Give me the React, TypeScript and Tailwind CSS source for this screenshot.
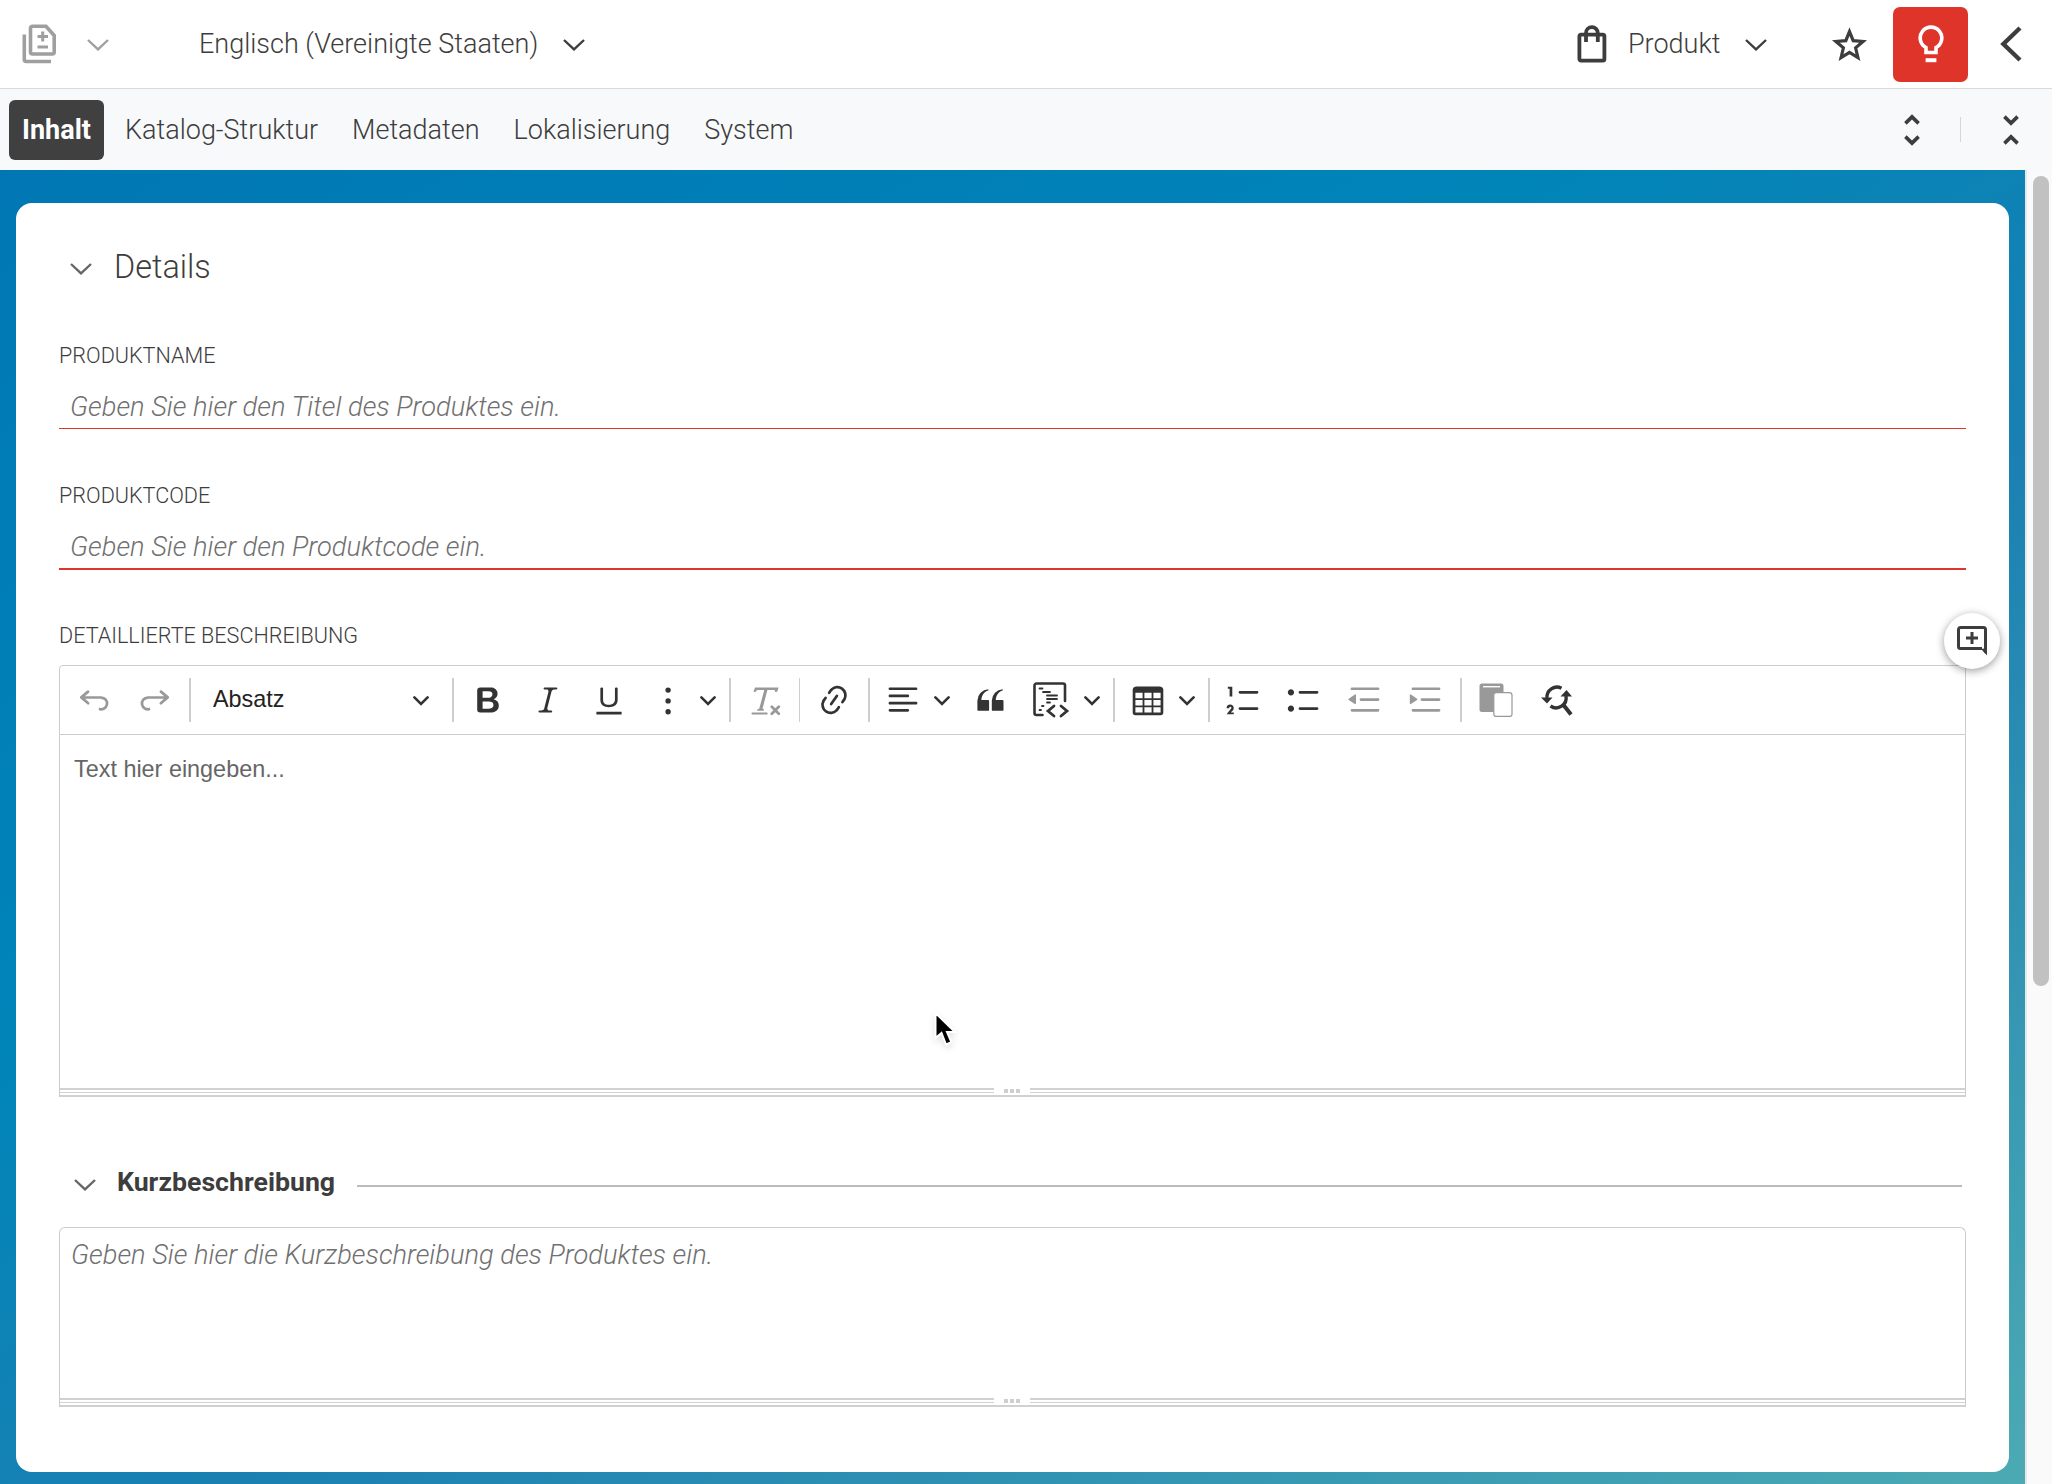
import React from "react"

const paths = {
  undo: "m5.042 9.367 2.189 1.837a.75.75 0 0 1-.965 1.149l-3.788-3.18a.747.747 0 0 1-.21-.284.75.75 0 0 1 .17-.945L6.23 4.762a.75.75 0 1 1 .964 1.15L4.863 7.866h8.917A.75.75 0 0 1 14 7.9a4 4 0 1 1-1.477 7.718l.344-1.489a2.5 2.5 0 1 0 1.094-4.73l.008-.032H5.042z",
  redo: "m14.958 9.367-2.189 1.837a.75.75 0 0 0 .965 1.149l3.788-3.18a.747.747 0 0 0 .21-.284.75.75 0 0 0-.17-.945L13.77 4.762a.75.75 0 1 0-.964 1.15l2.331 1.955H6.22A.75.75 0 0 0 6 7.9a4 4 0 1 0 1.477 7.718l-.344-1.489A2.5 2.5 0 1 1 6.039 9.4l-.008-.032h8.927z",
  bold: "M10.187 17H5.773c-.637 0-1.092-.138-1.364-.415-.273-.277-.409-.718-.409-1.323V4.738c0-.617.14-1.062.419-1.332.279-.27.73-.406 1.354-.406h4.68c.69 0 1.288.041 1.793.124.506.083.96.242 1.36.478.341.197.644.447.906.75a3.262 3.262 0 0 1 .808 2.162c0 1.401-.722 2.426-2.167 3.075C15.05 10.175 16 11.315 16 13.01a3.756 3.756 0 0 1-2.296 3.504 6.1 6.1 0 0 1-1.517.377c-.571.073-1.238.11-2 .11zm-.217-6.217H7v4.087h3.069c1.977 0 2.965-.69 2.965-2.072 0-.707-.256-1.22-.768-1.537-.512-.319-1.277-.478-2.296-.478zM7 5.13v3.619h2.606c.729 0 1.292-.067 1.69-.2a1.6 1.6 0 0 0 .91-.765c.165-.267.247-.566.247-.897 0-.707-.26-1.176-.778-1.409-.519-.232-1.31-.348-2.375-.348H7z",
  italic: "m9.586 14.633.021.004c-.036.335.095.655.393.962.082.083.173.15.274.201h1.474a.6.6 0 1 1 0 1.2H5.304a.6.6 0 0 1 0-1.2h1.15c.474-.07.809-.182 1.005-.334.157-.122.291-.32.404-.597l2.416-9.55a1.053 1.053 0 0 0-.281-.823 1.12 1.12 0 0 0-.442-.296H8.15a.6.6 0 0 1 0-1.2h6.443a.6.6 0 1 1 0 1.2h-1.195c-.376.056-.65.155-.823.296-.215.175-.423.439-.623.79l-2.366 9.347z",
  underline: "M3 18v-1.5h14V18zm2.2-8V3.6c0-.4.4-.6.8-.6.3 0 .7.2.7.6v6.2c0 2 1.3 2.8 3.2 2.8 1.9 0 3.4-.9 3.4-2.9V3.6c0-.3.4-.5.8-.5.3 0 .7.2.7.5V10c0 2.7-2.2 4-4.9 4-2.6 0-4.7-1.2-4.7-4z",
  more: "M8 4.5a1.5 1.5 0 1 0 3 0 1.5 1.5 0 0 0-3 0zm0 6a1.5 1.5 0 1 0 3 0 1.5 1.5 0 0 0-3 0zm0 6a1.5 1.5 0 1 0 3 0 1.5 1.5 0 0 0-3 0z",
  removeFormat: "M8.69 14.915c.053.052.173.083.36.093a.366.366 0 0 1 .345.485l-.003.01a.738.738 0 0 1-.697.497h-2.67a.374.374 0 0 1-.353-.496l.013-.038a.681.681 0 0 1 .644-.458c.197-.012.325-.043.386-.093a.28.28 0 0 0 .072-.11L9.592 4.5H6.269c-.359-.017-.609.013-.75.09-.142.078-.289.265-.442.563-.192.29-.516.464-.864.464H4.17a.43.43 0 0 1-.407-.569L4.46 3h13.08l-.62 2.043a.81.81 0 0 1-.775.574h-.114a.486.486 0 0 1-.486-.486c.001-.284-.054-.464-.167-.54-.112-.076-.367-.106-.766-.091h-3.28l-2.68 10.257c-.006.074.007.127.038.158zM3 17h8a.5.5 0 1 1 0 1H3a.5.5 0 1 1 0-1zm11.299 1.17a.75.75 0 1 1-1.06-1.06l1.414-1.415-1.415-1.414a.75.75 0 0 1 1.06-1.06l1.415 1.414 1.414-1.415a.75.75 0 1 1 1.06 1.06l-1.413 1.415 1.414 1.415a.75.75 0 0 1-1.06 1.06l-1.415-1.414-1.414 1.414z",
  link: "m11.077 15 .991-1.416a.75.75 0 1 1 1.229.86l-1.148 1.64a.748.748 0 0 1-.217.206 5.251 5.251 0 0 1-8.503-5.955.741.741 0 0 1 .12-.274l1.147-1.639a.75.75 0 1 1 1.228.86L4.933 10.7l.006.003a3.75 3.75 0 0 0 6.132 4.294l.006.004zm5.494-5.335a.748.748 0 0 1-.12.274l-1.147 1.639a.75.75 0 1 1-1.228-.86l.86-1.23a3.75 3.75 0 0 0-6.144-4.301l-.86 1.229a.75.75 0 0 1-1.229-.86l1.148-1.64a.748.748 0 0 1 .217-.206 5.251 5.251 0 0 1 8.503 5.955zm-4.563-2.532a.75.75 0 0 1 .184 1.045l-3.155 4.505a.75.75 0 1 1-1.229-.86l3.155-4.506a.75.75 0 0 1 1.045-.184z",
  align: "M2 3.75c0 .414.336.75.75.75h14.5a.75.75 0 1 0 0-1.5H2.75a.75.75 0 0 0-.75.75zm0 8c0 .414.336.75.75.75h14.5a.75.75 0 1 0 0-1.5H2.75a.75.75 0 0 0-.75.75zm0 4c0 .414.336.75.75.75h9.929a.75.75 0 1 0 0-1.5H2.75a.75.75 0 0 0-.75.75zm0-8c0 .414.336.75.75.75h9.929a.75.75 0 1 0 0-1.5H2.75a.75.75 0 0 0-.75.75z",
  quote: "M3 10.423a6.5 6.5 0 0 1 6.056-6.408l.038.67C6.448 5.423 5.354 7.663 5.22 10H9c.552 0 .5.432.5.986v4.511c0 .554-.448.503-1 .503h-5c-.552 0-.5-.449-.5-1.003v-4.574zm8 0a6.5 6.5 0 0 1 6.056-6.408l.038.67c-2.646.739-3.74 2.979-3.873 5.315H17c.552 0 .5.432.5.986v4.511c0 .554-.448.503-1 .503h-5c-.552 0-.5-.449-.5-1.003v-4.574z",
  table: "M3 6v3h4V6H3zm0 4v3h4v-3H3zm0 4v3h4v-3H3zm5 3h4v-3H8v3zm5 0h4v-3h-4v3zm4-4v-3h-4v3h4zm0-4V6h-4v3h4zm1.5 8a1.5 1.5 0 0 1-1.5 1.5H3A1.5 1.5 0 0 1 1.5 17V4c.222-.863 1.068-1.5 2-1.5h13c.932 0 1.778.637 2 1.5v13zM12 13v-3H8v3h4zm0-4V6H8v3h4z",
  numbered: "M7 5.75c0 .414.336.75.75.75h9.5a.75.75 0 1 0 0-1.5h-9.5a.75.75 0 0 0-.75.75zM3.5 3v5H2V3.7H1v-1h2.5V3zM.343 17.857l2.59-3.257H2.92a.6.6 0 1 0-1.04 0H.302a2 2 0 1 1 3.995 0h-.001c-.048.405-.16.734-.333.988-.175.254-.59.692-1.244 1.312H4.3v1h-4l.043-.043zM7 14.75a.75.75 0 0 1 .75-.75h9.5a.75.75 0 1 1 0 1.5h-9.5a.75.75 0 0 1-.75-.75z",
  bulleted: "M7 5.75c0 .414.336.75.75.75h9.5a.75.75 0 1 0 0-1.5h-9.5a.75.75 0 0 0-.75.75zm-6 0C1 4.784 1.777 4 2.75 4c.966 0 1.75.777 1.75 1.75 0 .966-.777 1.75-1.75 1.75C1.784 7.5 1 6.723 1 5.75zm6 9c0 .414.336.75.75.75h9.5a.75.75 0 1 0 0-1.5h-9.5a.75.75 0 0 0-.75.75zm-6 0c0-.966.777-1.75 1.75-1.75.966 0 1.75.777 1.75 1.75 0 .966-.777 1.75-1.75 1.75-.966 0-1.75-.777-1.75-1.75z",
  outdent: "M2 3.75c0 .414.336.75.75.75h14.5a.75.75 0 1 0 0-1.5H2.75a.75.75 0 0 0-.75.75zm5 6c0 .414.336.75.75.75h9.5a.75.75 0 1 0 0-1.5h-9.5a.75.75 0 0 0-.75.75zM2.75 16.5h14.5a.75.75 0 1 0 0-1.5H2.75a.75.75 0 1 0 0 1.5zm1.618-9.55L.98 9.358a.4.4 0 0 0 .013.661l3.39 2.207A.4.4 0 0 0 5 11.892V7.275a.4.4 0 0 0-.632-.326z",
  indent: "M2 3.75c0 .414.336.75.75.75h14.5a.75.75 0 1 0 0-1.5H2.75a.75.75 0 0 0-.75.75zm5 6c0 .414.336.75.75.75h9.5a.75.75 0 1 0 0-1.5h-9.5a.75.75 0 0 0-.75.75zM2.75 16.5h14.5a.75.75 0 1 0 0-1.5H2.75a.75.75 0 1 0 0 1.5zM1.632 6.95 5.02 9.358a.4.4 0 0 1-.013.661l-3.39 2.207A.4.4 0 0 1 1 11.892V7.275a.4.4 0 0 1 .632-.326z",
}

const ToolIcon = ({ name, className = "" }: { name: keyof typeof paths, className?: string }) => (
  <svg viewBox="0 0 20 20" fill="currentColor" fillRule="evenodd" className={`w-9 h-9 shrink-0 ${className}`}>
    <path d={paths[name]} />
  </svg>
)

const Chevron = ({ className = "" }: { className?: string }) => (
  <svg viewBox="0 0 22 12" fill="none" stroke="currentColor" strokeWidth="2.4" className={`w-[22px] h-3 shrink-0 ${className}`}>
    <path d="M1 1l10 9.4L21 1" />
  </svg>
)

const SmallChevron = ({ className = "" }: { className?: string }) => (
  <svg viewBox="0 0 16 10" fill="none" stroke="currentColor" strokeWidth="2.6" strokeLinecap="round" className={`w-4 h-2.5 shrink-0 ${className}`}>
    <path d="M1.4 1.4L8 7.9l6.6-6.5" />
  </svg>
)

const Sep = ({ className = "" }: { className?: string }) => (
  <div className={`h-11 shrink-0 bg-[#ccced1] ${className}`}></div>
)

const ResizeHandle = () => (
  <div className="relative h-[9px] flex flex-col justify-between">
    <div className="h-0.5 bg-[#d1d1d1]"></div>
    <div className="h-px bg-[#d1d1d1]"></div>
    <div className="h-0.5 bg-[#d1d1d1]"></div>
    <div className="absolute left-[934px] -top-0.5 h-[9px] w-9 bg-white flex items-center justify-center gap-0.5 pt-px">
      <div className="w-1 h-1 bg-[#cfcfcf]"></div>
      <div className="w-1 h-1 bg-[#cfcfcf]"></div>
      <div className="w-1 h-1 bg-[#cfcfcf]"></div>
    </div>
  </div>
)

const Header = () => (
  <div className="h-[89px] flex items-center border-b border-[#dadada] bg-white text-[27px] leading-[32px]">
    <svg viewBox="0 0 36 40" fill="none" stroke="currentColor" strokeWidth="3.6" className="ml-[22px] w-9 h-10 text-[#9f9f9f]">
      <path d="M2.3 10.5V35.5a2 2 0 0 0 2 2H29" />
      <path d="M10.5 2.2H24l8.2 9.3V28a2 2 0 0 1-2 2H10.5a2 2 0 0 1-2-2V4.2a2 2 0 0 1 2-2z" />
      <path d="M15.5 12.5h10.5M20.7 7.5v10M15.5 23h10.5" strokeWidth="3" />
    </svg>
    <Chevron className="ml-[29px] mt-0.5 text-[#9f9f9f]" />
    <span className="ml-[90px] w-[339px] whitespace-nowrap">Englisch (Vereinigte Staaten)</span>
    <Chevron className="ml-[25px] mt-0.5" />
    <div className="flex-1"></div>
    <svg viewBox="0 0 30 38" fill="none" stroke="currentColor" strokeWidth="3.8" className="w-[30px] h-[38px]">
      <rect x="2.4" y="9.6" width="25" height="26" rx="1.6" />
      <path d="M9 17V8a5.9 5.9 0 0 1 11.8 0v9" />
    </svg>
    <span className="ml-[21px] w-[94px]">Produkt</span>
    <Chevron className="ml-[23px] mt-0.5" />
    <svg viewBox="0 0 36 34" fill="none" stroke="currentColor" strokeWidth="3.2" className="ml-[64px] mb-px w-9 h-[34px]">
      <path d="M18.5 4.6l3.7 9.1 9.9.8-7.5 6.4 2.3 9.6-8.4-5.2-8.4 5.2 2.3-9.6-7.5-6.4 9.9-.8z" />
    </svg>
    <div className="ml-[26px] w-[75px] h-[75px] rounded-[7px] bg-[#df342a] flex items-center justify-center text-white">
      <svg viewBox="0 0 26 38" fill="none" stroke="currentColor" strokeWidth="3.6" className="w-[26px] h-[38px]">
        <path d="M8 27.5v-5A10.8 10.8 0 1 1 18 22.5v5z" />
        <path d="M7.6 35.2h10.8" strokeWidth="4" />
      </svg>
    </div>
    <svg viewBox="0 0 22 36" fill="none" stroke="currentColor" strokeWidth="4.4" className="ml-[32px] mr-[30px] w-[22px] h-9">
      <path d="M20 2L3.4 18 20 34" />
    </svg>
  </div>
)

const tabs = ["Katalog-Struktur", "Metadaten", "Lokalisierung", "System"]

const TabBar = () => (
  <div className="h-[81px] flex items-center bg-[#f8f9fb] pl-[9px] text-[27px] leading-[32px]">
    <div className="w-[95px] h-[60px] rounded-md bg-[#404040] text-white font-bold flex items-center justify-center">Inhalt</div>
    <div className="ml-[21px] flex gap-[34px]">
      {tabs.map((tab) => <span key={tab}>{tab}</span>)}
    </div>
    <div className="flex-1"></div>
    <svg viewBox="0 0 16 32" fill="none" stroke="currentColor" strokeWidth="3.6" className="w-4 h-8">
      <path d="M1.4 9.4L8 2.9l6.6 6.5M1.4 22.6L8 29.1l6.6-6.5" />
    </svg>
    <div className="ml-10 w-px h-[25px] bg-[#d6d6d6]"></div>
    <svg viewBox="0 0 16 32" fill="none" stroke="currentColor" strokeWidth="3.6" className="ml-[42px] mr-[33px] w-4 h-8">
      <path d="M1.4 2.6L8 9.1l6.6-6.5M1.4 29.4L8 22.9l6.6 6.5" />
    </svg>
  </div>
)

const Field = ({ label, placeholder, line }: { label: string, placeholder: string, line: string }) => (
  <div className="h-[140px] pt-0.5">
    <div className="h-[26px] text-[21.6px] leading-[26px]">{label}</div>
    <div className={`mt-[14px] border-[#e0352b] ${line}`}>
      <div className="h-[45px] pl-[11px] pt-2 text-[27.25px] leading-[32px] italic text-[#707070]">{placeholder}</div>
    </div>
  </div>
)

const Toolbar = () => (
  <div className="h-[70px] flex items-center border border-[#ccc] rounded-t text-[#333]">
    <ToolIcon name="undo" className="ml-4 text-[#999]" />
    <ToolIcon name="redo" className="ml-[25px] text-[#999]" />
    <Sep className="ml-4 w-0.5" />
    <span className="ml-[22px] w-[72px] pb-px font-['Liberation_Sans',sans-serif] font-normal text-[23.4px] text-[#222]">Absatz</span>
    <SmallChevron className="ml-[128px] mt-0.5" />
    <Sep className="ml-[23px] w-0.5" />
    <ToolIcon name="bold" className="ml-4" />
    <ToolIcon name="italic" className="ml-6" />
    <ToolIcon name="underline" className="ml-[25px]" />
    <ToolIcon name="more" className="ml-6" />
    <SmallChevron className="ml-[13px] mt-0.5" />
    <Sep className="ml-[13px] w-0.5" />
    <ToolIcon name="removeFormat" className="ml-4 text-[#999]" />
    <Sep className="ml-4 w-px" />
    <ToolIcon name="link" className="ml-4" />
    <Sep className="ml-4 w-0.5" />
    <ToolIcon name="align" className="ml-[15px]" />
    <SmallChevron className="ml-[13px] mt-0.5" />
    <ToolIcon name="quote" className="ml-[22px]" />
    <svg viewBox="0 0 38 36" fill="none" stroke="currentColor" strokeWidth="2.6" strokeLinecap="round" className="ml-6 w-[38px] h-9 shrink-0">
      <path d="M10.5 33H4.500a2 2 0 0 1-2-2V3.500a2 2 0 0 1 2-2H31a2 2 0 0 1 2 2V19" />
      <path d="M7.500 6.500h3M11 10h7M15 13.500h10M15 17h10M15 20.500h3M10 24h1.500M7.500 28h1.500" strokeWidth="1.8" />
      <path d="M22 24l-6 5 6 5M29 24l6 5-6 5" strokeWidth="2.8" />
    </svg>
    <SmallChevron className="ml-[14px] mt-0.5" />
    <Sep className="ml-[13px] w-0.5" />
    <ToolIcon name="table" className="ml-[15px]" />
    <SmallChevron className="ml-[13px] mt-0.5" />
    <Sep className="ml-[13px] w-0.5" />
    <ToolIcon name="numbered" className="ml-4" />
    <ToolIcon name="bulleted" className="ml-6" />
    <ToolIcon name="outdent" className="ml-[25px] text-[#999]" />
    <ToolIcon name="indent" className="ml-[25px] text-[#999]" />
    <Sep className="ml-4 w-0.5" />
    <svg viewBox="0 0 36 36" className="ml-[17px] w-9 h-9 shrink-0 text-[#999]">
      <path fill="currentColor" d="M3 1.5h19a2.5 2.5 0 0 1 2.5 2.5V30H3A2.5 2.5 0 0 1 .5 27.5V4A2.5 2.5 0 0 1 3 1.5z" />
      <path stroke="white" strokeWidth="1.4" d="M4 4.700h17" />
      <rect x="14.8" y="10.6" width="18.2" height="23.8" rx="2.5" fill="white" stroke="currentColor" strokeWidth="1.2" />
    </svg>
    <svg viewBox="0 0 36 36" fill="none" stroke="currentColor" strokeWidth="3.4" className="ml-[25px] w-9 h-9 shrink-0">
      <path d="M21.500 6.200A10 10 0 0 0 7 16M10.500 24A10 10 0 0 0 26 14" />
      <path d="M23.500 23l7.500 9.500" strokeWidth="4" />
      <path d="M1 15.500h11.500L7 21.500zM20.500 14.500H32L26.500 8z" fill="currentColor" stroke="none" />
    </svg>
  </div>
)

export default function App() {
  return <div className="w-[2052px] h-[1484px] overflow-hidden flex flex-col bg-white font-['Roboto',sans-serif] font-light text-[#3d3d3d]">
    <Header />
    <TabBar />
    <div className="flex-1 flex min-h-0">
      <div className="w-[2025px] px-4 pt-[33px] pb-3 bg-[linear-gradient(150deg,#0077b4_0%,#0085b9_36%,#1a80b2_58%,#4caab4_100%)]">
        <div className="relative h-full rounded-2xl bg-white px-[43px]">
          <div className="pt-11 h-[138px] flex items-start">
            <Chevron className="ml-[11px] mt-4 text-[#666]" />
            <span className="ml-[22px] text-[32.4px] leading-[40px]">Details</span>
          </div>
          <Field label="PRODUKTNAME" placeholder="Geben Sie hier den Titel des Produktes ein." line="border-b" />
          <Field label="PRODUKTCODE" placeholder="Geben Sie hier den Produktcode ein." line="border-b-2" />
          <div className="h-[44px] pt-0.5 text-[21.6px] leading-[26px]">DETAILLIERTE BESCHREIBUNG</div>
          <Toolbar />
          <div className="h-[353px] border-x border-[#ccc] pt-[20px] pl-[14px] font-['Liberation_Sans',sans-serif] font-normal text-[23.4px] leading-[28px] text-[#666]">Text hier eingeben...</div>
          <div className="border-x border-[#ccc]"><ResizeHandle /></div>
          <div className="h-[130px] pt-[70px] flex items-start">
            <Chevron className="ml-[15px] mt-3 text-[#666]" />
            <span className="ml-[21px] w-[220px] text-[26.7px] leading-[31px] font-bold">Kurzbeschreibung</span>
            <div className="ml-5 mr-1 mt-[18px] flex-1 h-0.5 bg-[#bbb]"></div>
          </div>
          <div className="h-[171px] border border-b-0 border-[#ccc] rounded-t-md pl-[11px] pt-[11px] text-[27.25px] leading-[32px] italic text-[#707070]">Geben Sie hier die Kurzbeschreibung des Produktes ein.</div>
          <div className="border-x border-[#ccc]"><ResizeHandle /></div>

          <div className="absolute left-[1928px] top-[410px] w-14 h-14 rounded-full bg-white shadow-[0_2px_8px_rgba(0,0,0,0.4)] flex items-center justify-center">
            <svg viewBox="0 0 30 30" fill="none" stroke="currentColor" strokeWidth="3" className="w-[30px] h-[30px]">
              <path d="M28.5 27V3.5a2 2 0 0 0-2-2h-23a2 2 0 0 0-2 2v17a2 2 0 0 0 2 2H25" />
              <path d="M24 23l6 6.500V22z" fill="currentColor" stroke="none" />
              <path d="M9 12h12M15 6v12" />
            </svg>
          </div>
          <svg viewBox="0 0 28 40" className="absolute left-[917px] top-[808px] w-7 h-10 drop-shadow-md">
            <path d="M2.5 2v25l6-5L13 33.500l5.500-2.200L14 21h8z" fill="black" stroke="white" strokeWidth="2" />
          </svg>
        </div>
      </div>
      <div className="flex-1 border-l-2 border-[#e8e8e8] bg-[#fafafa] pt-1.5 pl-1.5">
        <div className="w-4 h-[810px] rounded-full bg-[#c1c1c1]"></div>
      </div>
    </div>
  </div>
}
